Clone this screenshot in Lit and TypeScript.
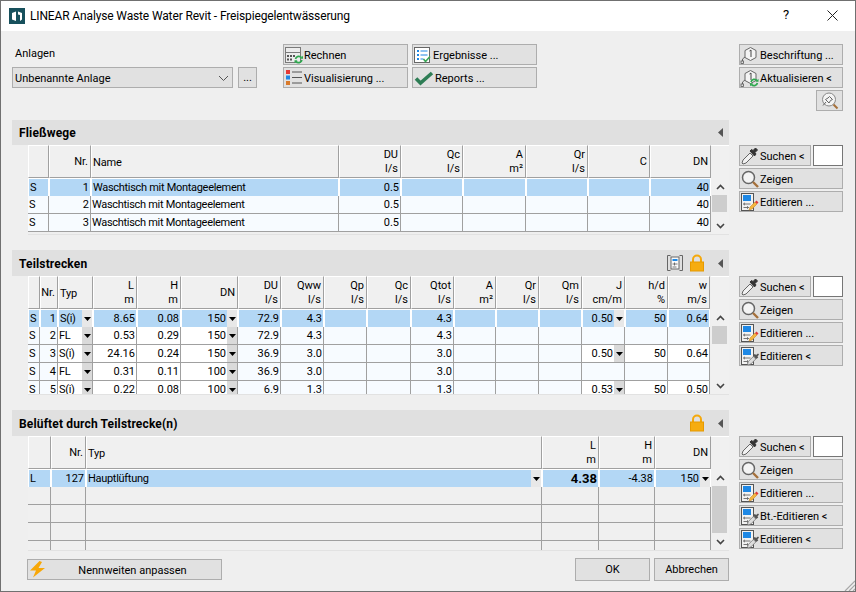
import { LitElement, html, css, svg, nothing } from "lit";
import { customElement, property } from "lit/decorators.js";

// ---- icons ----
const wrap = (w: number, h: number, body: unknown) =>
  html`<svg width=${w} height=${h} viewBox="0 0 ${w} ${h}" fill="none">${body}</svg>`;

const refresh = (x: number, y: number) => svg`
  <path d="M${x + 1} ${y + 3.5}a3.4 3.4 0 0 1 6-1.4M${x + 7.4} ${y + 4.5}a3.4 3.4 0 0 1-6 1.4" stroke="#2fa84f" stroke-width="1.7"/>
  <path d="M${x + 5.5} ${y + 3.2}h3v-3zM${x + 3} ${y + 4.8}h-3v3z" fill="#2fa84f"/>`;

const calcIcon = wrap(20, 18, svg`
  <rect x="1.5" y="1.5" width="15" height="15" stroke="#7a7a7a" fill="#ececec"/>
  <path d="M2 6.5h14" stroke="#7a7a7a"/>
  <path d="M3 9h2v2H3zM6 9h2v2H6zM9 9h2v2H9zM3 12.500h2v2H3zM6 12.500h2v2H6z" fill="#555"/>
  ${refresh(10.5, 9.5)}`);

const resultIcon = wrap(20, 18, svg`
  <rect x="1.5" y="1.500" width="15" height="15" stroke="#666" fill="#fff"/>
  <path d="M4 4h2v2H4zM4 8h2v2H4zM4 12h2v2H4z" fill="#1e88e5"/>
  <path d="M7.500 5h7M7.500 9h7M7.500 13h3" stroke="#1e88e5"/>
  <path d="M10.500 13l2 2.500 4.500-5" stroke="#3aa757" stroke-width="1.600"/>`);

const vizIcon = wrap(20, 18, svg`
  <path d="M2 1h4v4H2z" fill="#e53935"/><path d="M2 6.500h4v4H2z" fill="#1e88e5"/><path d="M2 12h4v4H2z" fill="#d97a2b"/>
  <path d="M8 3h10M8 8.500h10M8 14h10" stroke="#555"/>`);

const checkIcon = wrap(22, 16, svg`
  <path d="M3 8.500l4.500 4.500L19 3" stroke="#2e7d55" stroke-width="3.600"/>`);

const hexLabel = svg`
  <path d="M10.500 1.500l5.500 3v7l-5.500 3-5.500-3v-7z" stroke="#666" fill="#f4f4f4"/>
  <path d="M5 11l-2.500 2v2" stroke="#666"/><rect x="1" y="15" width="2.500" height="2.500" stroke="#555" stroke-width=".8"/>
  <path d="M9.500 5l1.500-1v7" stroke="#444"/>`;

const labelIcon = wrap(20, 18, hexLabel);
const labelRefreshIcon = wrap(20, 18, svg`${hexLabel}${refresh(10, 9.5)}`);

const pinSearchIcon = wrap(20, 18, svg`
  <circle cx="9" cy="7.500" r="6.500" stroke="#888" fill="#f4f4f4"/>
  <path d="M13.500 12.500l4 4" stroke="#a5703a" stroke-width="2"/>
  <path d="M9.500 4.500l3 3-2 1-1.500 2.500-3.500-3.500 2.500-1.500zM6 10l-3 3.500" stroke="#666"/>`);

const dropperIcon = wrap(20, 20, svg`
  <path d="M3 18l-1-1 1-3 7-7 3 3-7 7z" fill="#f2f2f2" stroke="#666"/>
  <path d="M10 5l1.500-1.500 1.500 1 2.500-2.500 2 2-2.500 2.500 1 1.500L14.500 10z" fill="#333" stroke="#333"/>`);

const zoomIcon = wrap(20, 20, svg`
  <circle cx="8.500" cy="8.500" r="6" stroke="#666" stroke-width="1.500" fill="#f4f4f4"/>
  <path d="M13 13l5 5" stroke="#a5703a" stroke-width="2.400"/>`);

const formBase = svg`
  <rect x="1.500" y="1.500" width="12" height="17" stroke="#555" fill="#f2f2f2"/>
  <rect x="3" y="3" width="8" height="6" fill="#1e88e5"/>
  <path d="M3.500 12h7M3.500 15.500h5M3.500 12l1.500-1.200M3.500 12l1.500 1.200M8.500 15.500l-1.500-1.200M8.500 15.500l-1.500 1.200" stroke="#555" stroke-width=".8"/>`;

const editIcon = wrap(20, 20, svg`${formBase}
  <path d="M9 18l1-3 5-5 2 2-5 5z" fill="#f4b63f" stroke="#c9892a" stroke-width=".6"/>
  <path d="M15 10l1.500-1.500 2 2-1.500 1.500z" fill="#e53935"/>`);

const editDropIcon = wrap(20, 20, svg`${formBase}
  <path d="M8.500 19l-1-1 .8-2.500 5-5 2.500 2.500-5 5z" fill="#ddd" stroke="#777" stroke-width=".8"/>
  <path d="M13 9l2-1 1 1 2-1.500 1 1-1.500 2 .8 1L16 13z" fill="#555"/>`);

const lockIcon = wrap(16, 18, svg`
  <path d="M4 8V5.500a4 4 0 0 1 8 0V8" stroke="#f4a80b" stroke-width="2"/>
  <rect x="1.500" y="8" width="13" height="9" fill="#f6ac10" stroke="#e69a00"/>`);

const clipIcon = wrap(18, 18, svg`
  <path d="M4.500 1.500h-3v15h3M13.500 1.500h3v15h-3" stroke="#666"/>
  <rect x="5" y="3" width="8" height="12" stroke="#666" fill="#fafafa"/>
  <path d="M6.500 5h5v2h-5z" fill="#1e88e5"/><path d="M6.500 10h5M8.500 8.500v3M6.500 13h4" stroke="#555" stroke-width=".8"/>`);

const boltIcon = wrap(17, 17, svg`
  <path d="M10.500 0L1 9.500h6L4 16.500l12-9.500H9.500L13 1z" fill="#f7a707"/>`);

const logoIcon = wrap(16, 16, svg`
  <rect width="16" height="16" fill="#17505c"/>
  <path d="M3 5l4-1.500V13L3 11.500zM9 3.500l4 1.500v6.500L11 13V7L9 6.500z" fill="#fff"/>`);

const closeIcon = wrap(11, 11, svg`<path d="M.5.500l10 10M10.500.500l-10 10" stroke="#222"/>`);
const chevDown = wrap(11, 6, svg`<path d="M1 1l4.500 4.500L10 1" stroke="#555"/>`);
const scrollUp = wrap(9, 6, svg`<path d="M1 5l3.500-3.500L8 5" stroke="#444" stroke-width="1.600"/>`);
const scrollDown = wrap(9, 6, svg`<path d="M1 1l3.500 3.500L8 1" stroke="#444" stroke-width="1.600"/>`);
const collapse = wrap(5, 9, svg`<path d="M5 0v9L0 4.500z" fill="#555"/>`);
const ddArrow = wrap(7, 4, svg`<path d="M0 0h7L3.500 4z" fill="#000"/>`);

const grip = wrap(12, 12, svg`<path d="M12 2L2 12M12 6l-6 6M12 10l-2 2" stroke="#a8a8a8" stroke-width="1.200"/>`);

// ---- table data ----
interface Col { w: number; head?: string[]; left?: boolean }
interface Cell { t?: string; dd?: boolean; white?: boolean; bold?: boolean }
interface Row { sel?: boolean; blank?: boolean; cells: Cell[] }

const c = (t = ""): Cell => ({ t });
const w = (t = ""): Cell => ({ t, white: true });
const d = (t = ""): Cell => ({ t, white: true, dd: true });

const waschtisch = "Waschtisch mit Montageelement";
const flowCols: Col[] = [
  { w: 21, left: true },
  { w: 42, head: ["Nr."] },
  { w: 248, head: ["Name"], left: true },
  { w: 62, head: ["DU", "l/s"] },
  { w: 62, head: ["Qc", "l/s"] },
  { w: 63, head: ["A", "m²"] },
  { w: 62, head: ["Qr", "l/s"] },
  { w: 62, head: ["C"] },
  { w: 61, head: ["DN"] },
];
const flowRows: Row[] = [1, 2, 3].map((n) => ({
  sel: n === 1,
  cells: [c("S"), c(String(n)), c(waschtisch), c("0.5"), c(), c(), c(), c(), c("40")],
}));

const segCols: Col[] = [
  { w: 12, left: true },
  { w: 18, head: ["Nr."] },
  { w: 35, head: ["Typ"], left: true },
  { w: 44, head: ["L", "m"] },
  { w: 44, head: ["H", "m"] },
  { w: 57, head: ["DN"] },
  { w: 43, head: ["DU", "l/s"] },
  { w: 43, head: ["Qww", "l/s"] },
  { w: 43, head: ["Qp", "l/s"] },
  { w: 44, head: ["Qc", "l/s"] },
  { w: 43, head: ["Qtot", "l/s"] },
  { w: 42, head: ["A", "m²"] },
  { w: 43, head: ["Qr", "l/s"] },
  { w: 43, head: ["Qm", "l/s"] },
  { w: 43, head: ["J", "cm/m"] },
  { w: 43, head: ["h/d", "%"] },
  { w: 42, head: ["w", "m/s"] },
];
const segRow = (n: number, typ: string, l: string, h: string, dn: string, du: string, q: string, j = "", hd = "", v = "", sel = false): Row => ({
  sel,
  cells: [
    c("S"), c(String(n)), d(typ), w(l), w(h), d(dn), c(du), c(q), c(), c(), c(q), c(), c(), c(),
    j ? d(j) : c(), j ? w(hd) : c(), j ? w(v) : c(),
  ],
});
const segRows: Row[] = [
  segRow(1, "S(i)", "8.65", "0.08", "150", "72.9", "4.3", "0.50", "50", "0.64", true),
  segRow(2, "FL", "0.53", "0.29", "150", "72.9", "4.3"),
  segRow(3, "S(i)", "24.16", "0.24", "150", "36.9", "3.0", "0.50", "50", "0.64"),
  segRow(4, "FL", "0.31", "0.11", "100", "36.9", "3.0"),
  segRow(5, "S(i)", "0.22", "0.08", "100", "6.9", "1.3", "0.53", "50", "0.50"),
];

const ventCols: Col[] = [
  { w: 23, left: true },
  { w: 35, head: ["Nr."] },
  { w: 456, head: ["Typ"], left: true },
  { w: 57, head: ["L", "m"] },
  { w: 56, head: ["H", "m"] },
  { w: 56, head: ["DN"] },
];
const emptyVent = (): Row => ({ blank: true, cells: [c(), c(), c(), c(), c(), c()] });
const ventRows: Row[] = [
  {
    sel: true,
    cells: [c("L"), c("127"), { t: "Hauptlüftung", dd: true }, { t: "4.38", bold: true }, c("-4.38"), { t: "150", dd: true }],
  },
  emptyVent(), emptyVent(), emptyVent(), emptyVent(),
];

@customElement("data-grid")
class DataGrid extends LitElement {
  @property({ attribute: false }) cols: Col[] = [];
  @property({ attribute: false }) rows: Row[] = [];
  @property({ type: Number }) bodyHeight = 56;
  @property({ type: Number }) thumb = 17;

  override render() {
    const tpl = this.cols.map((x) => x.w + "px").join(" ");
    return html`
      <div class="grid">
        <div class="data">
          <div class="row head" style="grid-template-columns:${tpl}">
            ${this.cols.map(
              (col) => html`<div class="hcell ${col.left ? "left" : ""}">
                ${(col.head ?? []).map((s) => html`<div>${s}</div>`)}
              </div>`,
            )}
          </div>
          <div class="body" style="height:${this.bodyHeight}px">
            ${this.rows.map(
              (r) => html`<div class="row ${r.sel ? "sel" : ""} ${r.blank ? "blank" : ""}" style="grid-template-columns:${tpl}">
                ${r.cells.map((cell, i) => this.renderCell(cell, this.cols[i]))}
              </div>`,
            )}
          </div>
        </div>
        <div class="scroll">
          <div class="corner"></div>
          <div class="arrow">${scrollUp}</div>
          <div class="track"><div class="thumb" style="height:${this.thumb}px"></div></div>
          <div class="arrow">${scrollDown}</div>
        </div>
      </div>
    `;
  }

  private renderCell(cell: Cell, col: Col) {
    const cls = ["cell", col.left ? "left" : "", cell.white ? "white" : "", cell.bold ? "bold" : ""].join(" ");
    return html`<div class=${cls}>
      <span class="txt">${cell.t}</span>
      ${cell.dd ? html`<span class="dd">${ddArrow}</span>` : nothing}
    </div>`;
  }

  static styles = css`
    :host { display: block; margin-left: 16px; border-bottom: 1px solid #e2e2e2; }
    .grid { display: flex; font: 11px/16px Roboto, sans-serif; color: #000; }
    .data { width: 683px; flex: none; }
    .body { overflow: hidden; }
    .row { display: grid; height: 18px; }
    .head { height: 33px; }
    .hcell {
      box-sizing: border-box;
      border-top: 1px solid #fff;
      border-left: 1px solid #fff;
      border-right: 1px solid #a0a0a0;
      border-bottom: 1px solid #a0a0a0;
      background: #f0f0f0;
      text-align: right;
      padding: 1px 2px 0 0;
      display: flex;
      flex-direction: column;
      justify-content: center;
      line-height: 14px;
      white-space: nowrap;
    }
    .hcell.left { text-align: left; padding: 2px 0 0 1px; letter-spacing: -0.2px; }
    .cell {
      box-sizing: border-box;
      display: flex;
      align-items: center;
      min-width: 0;
      background: #f7fbff;
      border-right: 1px solid #a0a0a0;
      border-bottom: 1px solid #a0a0a0;
      white-space: nowrap;
    }
    .cell.white { background: #fff; }
    .blank .cell { background: #f0f0f0; }
    .sel .cell, .sel .cell.white {
      background: #b3d7f5;
      border: 0 solid #fff;
      border-width: 1px;
    }
    .txt { flex: 1; min-width: 0; text-align: right; padding: 1px 1px 0 0; }
    .left .txt { text-align: left; padding: 1px 0 0 1px; letter-spacing: -0.3px; }
    .bold { font-weight: 700; font-size: 13px; }
    .dd {
      flex: none;
      width: 10px;
      height: 100%;
      background: #dadada;
      display: flex;
      align-items: center;
      justify-content: center;
    }
    .sel .dd { background: #e8e8e8; }
    .dd svg { display: block; }
    .scroll { width: 18px; display: flex; flex-direction: column; background: #f0f0f0; }
    .corner { height: 32px; border-top: 1px solid #fff; }
    .arrow { height: 17px; flex: none; display: flex; align-items: center; justify-content: center; }
    .track { flex: 1; min-height: 0; }
    .thumb { width: 15px; margin-left: 1px; background: #cdcdcd; }
  `;
}

// ---- dialog ----
@customElement("app-root")
export class AppRoot extends LitElement {
  private btn(label: string, icon: unknown, cls = "") {
    return html`<button class="btn ${cls}"><span class="ico">${icon}</span><span class="lbl">${label}</span></button>`;
  }

  private search() {
    return html`<div class="search">
      ${this.btn("Suchen <", dropperIcon, "grow")}
      <div class="swatch"></div>
    </div>`;
  }

  override render() {
    return html`
      <div class="win">
        <header class="title">
          <span class="logo">${logoIcon}</span>
          <span class="caption">LINEAR Analyse Waste Water Revit - Freispiegelentwässerung</span>
          <span class="help">?</span>
          <span class="close">${closeIcon}</span>
        </header>

        <div class="content">
          <div class="top">
            <div class="anlagen">
              <label>Anlagen</label>
              <div class="combo-row">
                <div class="combo"><span>Unbenannte Anlage</span>${chevDown}</div>
                <button class="btn dots">...</button>
              </div>
            </div>
            <div class="actions">
              ${this.btn("Rechnen", calcIcon)}
              ${this.btn("Ergebnisse ...", resultIcon)}
              ${this.btn("Visualisierung ...", vizIcon)}
              ${this.btn("Reports ...", checkIcon, "wide-ico")}
            </div>
            <div class="stack labels">
              ${this.btn("Beschriftung ...", labelIcon)}
              ${this.btn("Aktualisieren <", labelRefreshIcon)}
              <button class="btn pin">${pinSearchIcon}</button>
            </div>
          </div>

          <section class="sec first">
            <div class="band"><b>Fließwege</b><span class="tools"><span class="tri">${collapse}</span></span></div>
            <div class="stack side">
              ${this.search()}
              ${this.btn("Zeigen", zoomIcon)}
              ${this.btn("Editieren ...", editIcon)}
            </div>
            <data-grid .cols=${flowCols} .rows=${flowRows} bodyHeight="56" thumb="17"></data-grid>
          </section>

          <section class="sec">
            <div class="band"><b>Teilstrecken</b><span class="tools">${clipIcon}${lockIcon}<span class="tri">${collapse}</span></span></div>
            <div class="stack side">
              ${this.search()}
              ${this.btn("Zeigen", zoomIcon)}
              ${this.btn("Editieren ...", editIcon)}
              ${this.btn("Editieren <", editDropIcon)}
            </div>
            <data-grid .cols=${segCols} .rows=${segRows} bodyHeight="85" thumb="18"></data-grid>
          </section>

          <section class="sec">
            <div class="band"><b>Belüftet durch Teilstrecke(n)</b><span class="tools">${lockIcon}<span class="tri">${collapse}</span></span></div>
            <div class="stack side">
              ${this.search()}
              ${this.btn("Zeigen", zoomIcon)}
              ${this.btn("Editieren ...", editIcon)}
              ${this.btn("Bt.-Editieren <", editDropIcon)}
              ${this.btn("Editieren <", editDropIcon)}
            </div>
            <data-grid .cols=${ventCols} .rows=${ventRows} bodyHeight="81" thumb="47"></data-grid>
          </section>

          <footer class="foot">
            <button class="btn nenn"><span class="bolt">${boltIcon}</span><span class="mid">Nennweiten anpassen</span></button>
            <div class="dlg">
              <button class="btn big">OK</button>
              <button class="btn big">Abbrechen</button>
            </div>
          </footer>
          <span class="grip">${grip}</span>
        </div>
      </div>
    `;
  }

  static styles = css`
    :host { display: block; width: 856px; height: 592px; overflow: hidden; }
    * { box-sizing: border-box; }
    .win {
      width: 856px;
      height: 592px;
      border: 1px solid #707070;
      display: flex;
      flex-direction: column;
      background: #efefef;
      font: 11px/16px Roboto, sans-serif;
      color: #000;
    }
    svg { display: block; }
    .title { height: 30px; flex: none; background: #fff; display: flex; align-items: center; padding-left: 8px; }
    .logo { width: 21px; flex: none; }
    .caption { flex: 1; white-space: nowrap; font-size: 12px; letter-spacing: -0.14px; }
    .help { width: 12px; text-align: center; margin-right: 35px; font-size: 13px; margin-top: -2px; }
    .close { margin-right: 17px; margin-top: -2px; }
    .content { flex: 1; position: relative; padding: 13px 0 0 11px; }

    .top { display: flex; height: 67px; }
    .anlagen { width: 245px; display: flex; flex-direction: column; }
    .anlagen label { height: 23px; padding: 2px 0 0 3px; }
    .combo-row { display: flex; gap: 5px; }
    .combo {
      width: 221px;
      height: 21px;
      background: #e1e1e1;
      border: 1px solid #adadad;
      display: flex;
      align-items: center;
      justify-content: space-between;
      padding: 0 3px 0 2px;
    }
    .combo span { padding-top: 2px; }
    .actions { margin-left: 26px; width: 254px; display: grid; grid-template-columns: 125px 125px; grid-auto-rows: 21px; gap: 2px 4px; }
    .labels { margin-left: 202px; }

    .btn {
      font: inherit;
      color: inherit;
      height: 21px;
      padding: 0;
      margin: 0;
      background: #e1e1e1;
      border: 1px solid #adadad;
      display: flex;
      align-items: center;
      white-space: nowrap;
      text-align: left;
    }
    .ico { width: 20px; flex: none; display: flex; justify-content: center; }
    .lbl { padding-top: 2px; }
    .wide-ico .ico { width: 22px; }
    .dots { width: 19px; justify-content: center; }
    .pin { width: 27px; align-self: flex-end; justify-content: center; }

    .stack { width: 104px; display: flex; flex-direction: column; gap: 2px; }
    .search { display: flex; gap: 2px; }
    .grow { flex: 1; }
    .swatch { width: 30px; height: 21px; background: #fff; border: 1px solid #767676; }

    .sec {
      display: grid;
      grid-template-columns: 717px 104px;
      grid-template-rows: 26px auto;
      column-gap: 10px;
      margin-top: 15px;
    }
    .sec.first { grid-template-rows: 25px auto; margin-top: 9px; }
    .band {
      grid-column: 1;
      grid-row: 1;
      background: #e0e0e0;
      display: flex;
      align-items: center;
      justify-content: space-between;
      padding-left: 7px;
    }
    .band b { font-weight: 700; font-size: 12px; letter-spacing: 0.15px; padding-top: 1px; }
    .first .band b { padding-top: 0; }
    .tools { display: flex; align-items: center; gap: 5px; padding-right: 6px; }
    .tri { margin-left: 8px; }
    data-grid { grid-column: 1; grid-row: 2; }
    .side { grid-column: 2; grid-row: 2; }

    .foot {
      width: 717px;
      height: 23px;
      margin-top: 7px;
      display: flex;
      align-items: center;
      justify-content: space-between;
      padding-left: 15px;
    }
    .nenn { width: 195px; }
    .bolt { width: 16px; flex: none; padding-left: 1px; }
    .mid { flex: 1; text-align: center; padding-top: 2px; }
    .dlg { display: flex; gap: 4px; }
    .big { width: 75px; height: 23px; justify-content: center; }
    .grip { position: absolute; right: 0; bottom: 0; }
  `;
}
